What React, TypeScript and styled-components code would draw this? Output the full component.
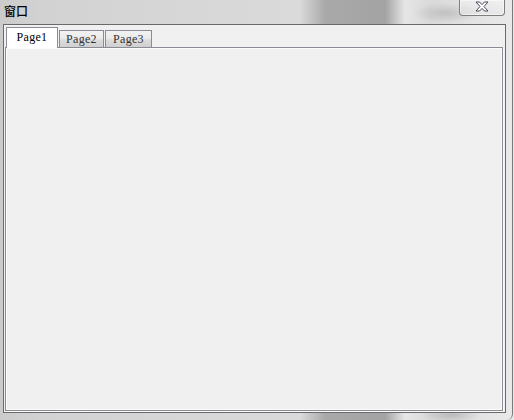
import React from "react";
import styled, { createGlobalStyle } from "styled-components";

const Global = createGlobalStyle`
  html, body { margin: 0; padding: 0; background: #e8e8e8; overflow: hidden; }
  #root { width: 514px; height: 420px; }
`;

const Frame = styled.div`
  box-sizing: border-box;
  width: 513px;
  height: 420px;
  display: flex;
  flex-direction: column;
  padding: 0 0 0 3px;
  border-right: 1px solid #7b7b7b;
  border-bottom-right-radius: 6px;
  background:
    radial-gradient(ellipse 34px 10px at 446px 13px, rgba(130,130,130,0.3), rgba(130,130,130,0)),
    radial-gradient(ellipse 30px 8px at 452px 415px, rgba(120,120,120,0.35), rgba(120,120,120,0)),
    linear-gradient(to right, #cbcbcb 0, #d2d2d2 40px, #d6d6d6 160px, #dadada 300px,
      #a9a9a9 325px, #a3a3a3 385px, #e6e6e6 405px, #d9d9d9 430px, #e2e2e2 470px, #e9e9e9 513px);
`;

const TitleBar = styled.div`
  height: 24px;
  flex: none;
  display: flex;
  justify-content: space-between;
  align-items: flex-start;
`;

const Title = styled.span`
  margin: 3px 0 0 1px;
  font-family: "Noto Sans CJK SC", "Noto Sans", sans-serif;
  font-size: 12px;
  line-height: 16px;
  font-weight: 500;
  color: #000;
`;

const CloseButton = styled.div`
  box-sizing: border-box;
  width: 46px;
  height: 16px;
  margin-right: 7px;
  display: flex;
  align-items: flex-start;
  justify-content: center;
  padding-top: 1px;
  border: 1px solid #7e7e7e;
  border-top: none;
  border-radius: 0 0 4px 4px;
  background: linear-gradient(to bottom, rgba(255,255,255,0.35), rgba(230,230,230,0.55));
  box-shadow: inset 0 0 0 1px rgba(255,255,255,0.5);
`;

const Client = styled.div`
  box-sizing: border-box;
  width: 503px;
  height: 389px;
  flex: none;
  border: 1px solid #6a6a6a;
  background: #f0f0f0;
  display: flex;
  flex-direction: column;
  padding-top: 2px;
`;

const TabStrip = styled.div`
  display: flex;
  align-items: flex-end;
  height: 21px;
  margin-left: 2px;
  position: relative;
  z-index: 2;
`;

const Tab = styled.div<{ $active?: boolean; $w: number; $gap?: number }>`
  box-sizing: border-box;
  width: ${(p) => p.$w}px;
  height: ${(p) => (p.$active ? 21 : 18)}px;
  margin-left: ${(p) => p.$gap ?? 0}px;
  display: flex;
  align-items: center;
  justify-content: center;
  padding-bottom: ${(p) => (p.$active ? 2 : 0)}px;
  border: 1px solid #898c95;
  border-bottom: ${(p) => (p.$active ? "none" : "1px solid #898c95")};
  background: ${(p) =>
    p.$active ? "#ffffff" : "linear-gradient(to bottom, #f2f2f2 0%, #ebebeb 45%, #dddddd 55%, #cfcfcf 100%)"};
  font-family: "Liberation Serif", "Times New Roman", serif;
  font-size: 12px;
  color: ${(p) => (p.$active ? "#000" : "#333")};
  letter-spacing: 0.3px;
`;

const Pane = styled.div`
  box-sizing: border-box;
  width: 498px;
  height: 364px;
  margin: -1px 0 0 1px;
  border: 1px solid #898c95;
  background: #f0f0f0;
  box-shadow: inset 0 0 0 1px #fbfbfb, 1px 1px 0 #fbfbfb;
  position: relative;
  z-index: 1;
`;

const CloseGlyph = () => (
  <svg width="14" height="11" viewBox="0 0 14 11">
    <polygon
      points="1,1 4.5,1 7,3.6 9.5,1 13,1 9,5.5 13,10 9.5,10 7,7.4 4.5,10 1,10 5,5.5"
      fill="#ffffff"
      stroke="#464b5a"
      strokeWidth="1"
      strokeLinejoin="round"
    />
  </svg>
);

export default function App() {
  return (
    <>
      <Global />
      <Frame>
        <TitleBar>
          <Title>窗口</Title>
          <CloseButton>
            <CloseGlyph />
          </CloseButton>
        </TitleBar>
        <Client>
          <TabStrip>
            <Tab $active $w={52}>Page1</Tab>
            <Tab $w={45} $gap={1}>Page2</Tab>
            <Tab $w={47} $gap={1}>Page3</Tab>
          </TabStrip>
          <Pane />
        </Client>
      </Frame>
    </>
  );
}
